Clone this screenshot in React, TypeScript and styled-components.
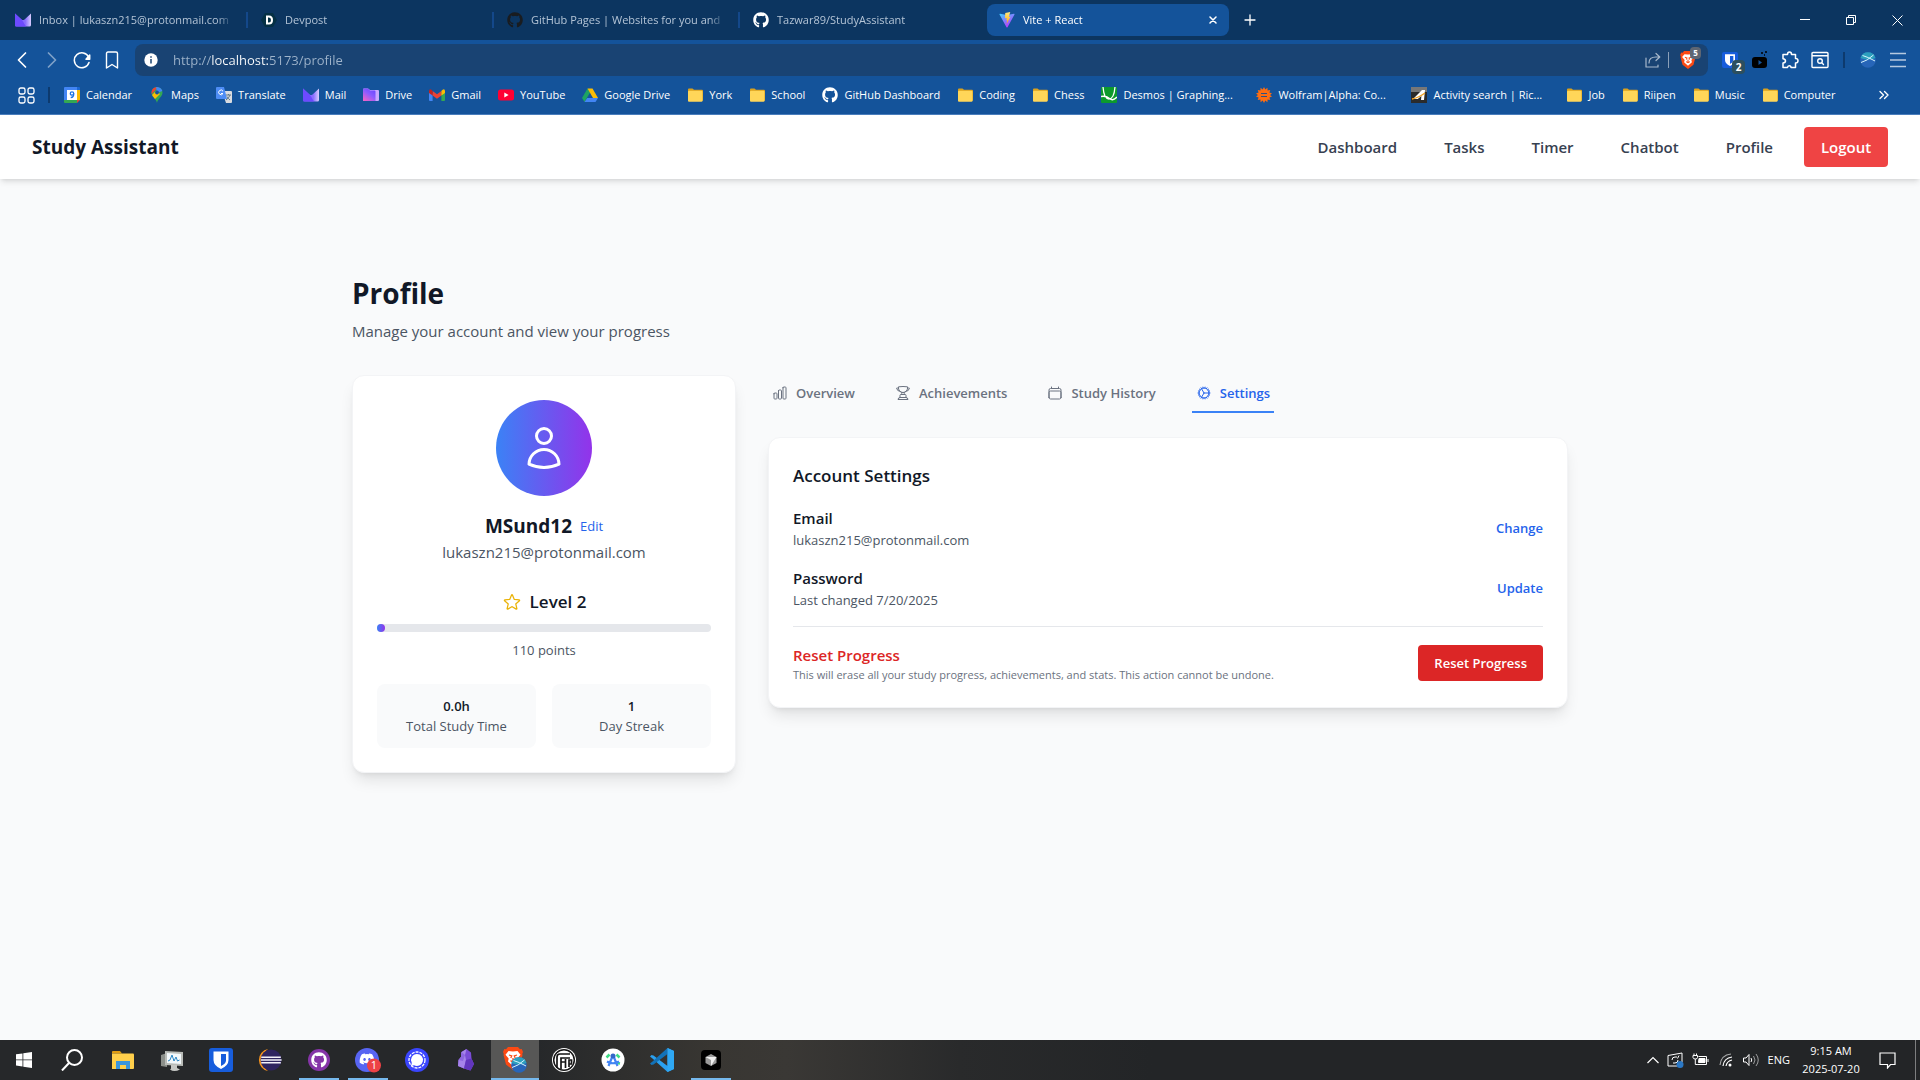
import React from "react";
import styled, { createGlobalStyle, css } from "styled-components";
import { FaGithub, FaDiscord } from "react-icons/fa";
import {
  HiOutlineUser,
  HiOutlineStar,
  HiOutlineChartBar,
  HiOutlineTrophy,
  HiOutlineCalendar,
  HiOutlineCog,
} from "react-icons/hi2";

const GlobalStyle = createGlobalStyle`
  *, *::before, *::after { box-sizing: border-box; }
  body { margin: 0; font-family: "Open Sans", "Noto Sans", sans-serif; font-size: 15px; line-height: 24px; color: #111827; }
  h1, h2, h3, p, dl, dt, dd, ul { margin: 0; padding: 0; }
  ul { list-style: none; }
  a { color: inherit; text-decoration: none; }
  button { margin: 0; padding: 0; border: 0; background: none; color: inherit; font: inherit; cursor: pointer; }
  svg { display: block; flex: none; }
`;

const Screen = styled.div`
  display: flex;
  flex-direction: column;
  min-height: 100vh;
  background: #f9fafb;
`;

/* ---------- browser chrome ---------- */

const Chrome = styled.header`
  background: #14539a;
  color: #fff;
  border-bottom: 1px solid #4a7ebd;
  font-size: 11px;
  line-height: 16px;
`;

const TabStrip = styled.div`
  display: flex;
  align-items: center;
  height: 40px;
  padding-left: 3px;
  background: #0c3560;
`;

const BrowserTab = styled.div<{ $active?: boolean }>`
  display: flex;
  align-items: center;
  gap: 8px;
  flex: 0 1 242px;
  min-width: 0;
  height: 32px;
  padding: 0 12px;
  border-radius: 8px;
  color: ${(p) => (p.$active ? "#fff" : "#b4c4d6")};
  background: ${(p) => (p.$active ? "#14539a" : "transparent")};
`;

const TabTitle = styled.a`
  flex: 1;
  overflow: hidden;
  white-space: nowrap;
  mask-image: linear-gradient(to right, #000 calc(100% - 16px), transparent 100%);
`;

const TabDivider = styled.span<{ $hidden?: boolean }>`
  flex: none;
  width: 2px;
  height: 16px;
  margin: 0 1px;
  background: ${(p) => (p.$hidden ? "transparent" : "#14488a")};
`;

const NewTab = styled.button`
  display: grid;
  place-items: center;
  width: 32px;
  height: 32px;
  margin-left: 5px;
`;

const WindowButtons = styled.div`
  display: flex;
  margin-left: auto;
`;

const WindowButton = styled.button`
  display: grid;
  place-items: center;
  width: 46px;
  height: 40px;
`;

const Toolbar = styled.div`
  display: flex;
  align-items: center;
  height: 40px;
  padding: 0 7px;
`;

const ToolButton = styled.button<{ $dim?: boolean }>`
  position: relative;
  display: grid;
  place-items: center;
  width: 30px;
  height: 32px;
  opacity: ${(p) => (p.$dim ? 0.45 : 1)};
`;

const AddressBar = styled.form`
  display: flex;
  align-items: center;
  flex: 1;
  height: 32px;
  margin: 0 7px 0 8px;
  padding: 0 5px 0 8px;
  border-radius: 8px;
  background: #194373;
`;

const AddressInput = styled.input`
  flex: 1;
  min-width: 0;
  margin-left: 14px;
  padding: 0;
  border: 0;
  outline: 0;
  font: 13px/20px "Open Sans", "Noto Sans", sans-serif;
  color: transparent;
  background: linear-gradient(to right, #9fb4cb 39px, #fff 39px, #fff 95px, #9fb4cb 95px);
  background-clip: text;
  -webkit-background-clip: text;
`;

const AddressLine = styled.span`
  width: 1px;
  height: 16px;
  margin-right: 4px;
  background: #8ba0b9;
`;

const ToolLine = styled.span`
  width: 2px;
  height: 16px;
  margin: 0 8px;
  background: #0d3a6e;
`;

const CountBadge = styled.span<{ $grey?: boolean }>`
  position: absolute;
  display: grid;
  place-items: center;
  border-radius: 4px;
  color: #fff;
  ${(p) =>
    p.$grey
      ? css`
          top: 3px;
          right: 2px;
          width: 11px;
          height: 12px;
          font: 700 8px/10px "Open Sans", sans-serif;
          background: #5e6673;
        `
      : css`
          right: 0;
          bottom: 2px;
          width: 13px;
          height: 14px;
          font: 700 10px/12px "Open Sans", sans-serif;
          background: #2c4f5e;
        `}
`;

const BookmarkBar = styled.nav`
  display: flex;
  align-items: center;
  height: 34px;
  padding: 0 30px 4px 18px;
`;

const BookmarkLine = styled.span`
  width: 2px;
  height: 16px;
  margin: 0 14px 0 13px;
  background: #0d3a6e;
`;

const BookmarkList = styled.ul`
  display: flex;
  flex: 1;
  gap: 17px;
`;

const Bookmark = styled.a<{ $long?: boolean }>`
  display: flex;
  align-items: center;
  gap: 6px;
  min-width: ${(p) => (p.$long ? "138px" : "0")};
  white-space: nowrap;
`;

/* ---------- application ---------- */

const NavBar = styled.nav`
  display: flex;
  align-items: center;
  justify-content: space-between;
  height: 64px;
  padding: 0 32px;
  background: #fff;
  box-shadow: 0 4px 6px -1px rgb(0 0 0 / 0.1), 0 2px 4px -2px rgb(0 0 0 / 0.1);
`;

const Brand = styled.a`
  font-size: 19px;
  line-height: 28px;
  font-weight: 700;
`;

const NavLinks = styled.div`
  display: flex;
  align-items: center;
  gap: 47px;
  font-weight: 600;
  color: #374151;
`;

const LogoutButton = styled.button`
  min-width: 84px;
  height: 40px;
  margin-left: -16px;
  padding: 0 16px;
  border-radius: 4px;
  background: #ef4444;
  color: #fff;
  font-weight: 600;
`;

const Page = styled.main`
  flex: 1;
  width: 100%;
  max-width: 1280px;
  margin: 0 auto;
  padding: 96px 32px 64px;
`;

const PageTitle = styled.h1`
  font-size: 28px;
  line-height: 36px;
  font-weight: 700;
`;

const PageIntro = styled.p`
  margin-top: 8px;
  color: #4b5563;
`;

const Columns = styled.div`
  display: grid;
  grid-template-columns: repeat(3, minmax(0, 1fr));
  align-items: start;
  gap: 32px;
  margin-top: 32px;
`;

const Card = styled.section`
  padding: 24px;
  border: 1px solid #f3f4f6;
  border-radius: 12px;
  background: #fff;
  box-shadow: 0 10px 15px -3px rgb(0 0 0 / 0.1), 0 4px 6px -4px rgb(0 0 0 / 0.1);
`;

const ProfileCard = styled(Card)`
  display: flex;
  flex-direction: column;
  align-items: center;
`;

const Avatar = styled.div`
  display: grid;
  place-items: center;
  width: 96px;
  height: 96px;
  border-radius: 50%;
  background: linear-gradient(to right, #3b82f6, #9333ea);
  color: #fff;
`;

const NameRow = styled.div`
  display: flex;
  align-items: center;
  gap: 8px;
  margin-top: 16px;
`;

const UserName = styled.h2`
  font-size: 19px;
  line-height: 28px;
  font-weight: 700;
`;

const EditButton = styled.button`
  font-size: 13px;
  line-height: 20px;
  color: #2563eb;
`;

const Muted = styled.p`
  color: #4b5563;
`;

const LevelRow = styled.div`
  display: flex;
  align-items: center;
  gap: 8px;
  margin-top: 24px;
  font-size: 17px;
  line-height: 28px;
  font-weight: 600;

  svg {
    color: #eab308;
  }
`;

const ProgressTrack = styled.div`
  width: 100%;
  height: 8px;
  margin-top: 8px;
  border-radius: 4px;
  background: #e5e7eb;
`;

const ProgressFill = styled.div`
  height: 8px;
  min-width: 8px;
  border-radius: 4px;
  background: linear-gradient(to right, #3b82f6, #9333ea);
`;

const Points = styled.p`
  margin-top: 8px;
  font-size: 13px;
  line-height: 20px;
  color: #4b5563;
`;

const Stats = styled.dl`
  display: grid;
  grid-template-columns: 1fr 1fr;
  gap: 16px;
  width: 100%;
  margin-top: 24px;
`;

const Stat = styled.div`
  display: flex;
  flex-direction: column-reverse;
  padding: 12px;
  border-radius: 8px;
  background: #f9fafb;
  font-size: 13px;
  line-height: 20px;
  text-align: center;

  dt {
    color: #4b5563;
  }

  dd {
    font-weight: 600;
  }
`;

const Details = styled.div`
  grid-column: span 2;
`;

const SectionTabs = styled.div`
  display: flex;
  gap: 32px;
  margin-bottom: 24px;
`;

const SectionTab = styled.button<{ $active?: boolean }>`
  display: flex;
  align-items: center;
  gap: 8px;
  padding: 8px 4px;
  border-bottom: 2px solid ${(p) => (p.$active ? "#3b82f6" : "transparent")};
  font-size: 13px;
  line-height: 20px;
  font-weight: 600;
  color: ${(p) => (p.$active ? "#2563eb" : "#6b7280")};
`;

const SectionTitle = styled.h2`
  font-size: 17px;
  line-height: 28px;
  font-weight: 600;
`;

const SettingRow = styled.div<{ $divided?: boolean }>`
  display: flex;
  align-items: center;
  justify-content: space-between;
  margin-top: 16px;
  ${(p) =>
    p.$divided &&
    css`
      padding-top: 16px;
      border-top: 1px solid #e5e7eb;
    `}
`;

const SettingName = styled.h3<{ $danger?: boolean }>`
  font-size: 15px;
  line-height: 24px;
  font-weight: 600;
  color: ${(p) => (p.$danger ? "#dc2626" : "#111827")};
`;

const SettingValue = styled.p<{ $small?: boolean }>`
  font-size: ${(p) => (p.$small ? 11 : 13)}px;
  line-height: ${(p) => (p.$small ? 16 : 20)}px;
  color: ${(p) => (p.$small ? "#6b7280" : "#4b5563")};
`;

const LinkButton = styled.button`
  font-size: 13px;
  line-height: 20px;
  font-weight: 600;
  color: #2563eb;
`;

const DangerButton = styled.button`
  padding: 8px 16px;
  border-radius: 4px;
  background: #dc2626;
  color: #fff;
  font-size: 13px;
  line-height: 20px;
  font-weight: 600;
`;

/* ---------- taskbar ---------- */

const Taskbar = styled.footer`
  display: flex;
  align-items: stretch;
  height: 40px;
  color: #fff;
  background: linear-gradient(to right, #26282a 0, #26282a 28%, #383632 37%, #3a3835 41%, #292a2b 50%, #232527 60%, #232527 100%);
`;

const AppButtons = styled.div`
  display: flex;
  gap: 1px;
  margin-left: 3px;
`;

const TaskButton = styled.button<{ $running?: boolean; $active?: boolean }>`
  position: relative;
  display: grid;
  place-items: center;
  width: 48px;
  height: 40px;
  background: ${(p) => (p.$active ? "#575756" : "transparent")};

  &::after {
    content: "";
    position: absolute;
    left: ${(p) => (p.$active ? 0 : 4)}px;
    right: ${(p) => (p.$active ? 0 : 4)}px;
    bottom: 0;
    height: 2px;
    background: ${(p) => (p.$running || p.$active ? "#76b9ed" : "transparent")};
  }
`;

const Tray = styled.div`
  display: flex;
  align-items: center;
  gap: 8px;
  margin-left: auto;
  font-size: 11px;
  line-height: 18px;
`;

const Clock = styled.time`
  width: 66px;
  margin-right: 7px;
  text-align: center;
`;

const ShowDesktop = styled.button`
  width: 5px;
  height: 40px;
  margin-left: 11px;
  border-left: 1px solid #7d7e7f;
`;

/* ---------- drawings ---------- */

const ProtonMail = () => (
  <svg width="16" height="16" viewBox="0 0 16 16">
    <defs>
      <linearGradient id="pm" x1="0" x2="1">
        <stop offset="0" stopColor="#7a5cff" />
        <stop offset=".65" stopColor="#8a6eff" />
        <stop offset="1" stopColor="#d9ccff" />
      </linearGradient>
    </defs>
    <path d="M0 1.500l6.500 6q1.500 1.200 3 0L16 1.500V13q0 1.500-1.500 1.500h-13Q0 14.500 0 13z" fill="url(#pm)" />
    <path d="M0 1.500l7 6.500 4 6.500H1.500Q0 14.500 0 13z" fill="#6d4aff" />
  </svg>
);

const ProtonDrive = () => (
  <svg width="16" height="16" viewBox="0 0 16 16">
    <defs>
      <linearGradient id="pd" x1="0" y1="1" x2=".7" y2="0">
        <stop offset="0" stopColor="#ff62c0" />
        <stop offset=".6" stopColor="#8b5cff" />
        <stop offset="1" stopColor="#6d4aff" />
      </linearGradient>
    </defs>
    <path d="M0 2.500q0-1 1-1h4l2 1.500h8q1 0 1 1v9q0 1-1 1H1q-1 0-1-1z" fill="#c9a8ff" />
    <path d="M0 2.500q0-1 1-1h4l2 2h4.500q1 0 1 1V14H1q-1 0-1-1z" fill="url(#pd)" />
  </svg>
);

const Devpost = () => (
  <svg width="16" height="16" viewBox="0 0 16 16">
    <path d="M4 1h8l4 7-4 7H4L0 8z" fill="#053044" />
    <path d="M6 4.500h2q3 0 3 3.500t-3 3.500H6z" fill="none" stroke="#fff" strokeWidth="2" />
  </svg>
);

const Vite = () => (
  <svg width="16" height="16" viewBox="0 0 32 32">
    <defs>
      <linearGradient id="v1" x1="0" y1="0" x2=".6" y2="1">
        <stop offset="0" stopColor="#41d1ff" />
        <stop offset="1" stopColor="#bd34fe" />
      </linearGradient>
      <linearGradient id="v2" x1="0" y1="0" x2="0" y2="1">
        <stop offset="0" stopColor="#ffea83" />
        <stop offset="1" stopColor="#ffa800" />
      </linearGradient>
    </defs>
    <path d="M31 5L17 30.500q-1 1-2 0L1 5q-.5-1.500 1-1.500l14 2.500 14-2.500q1.500 0 1 1.500z" fill="url(#v1)" />
    <path d="M22.500 0L12.500 2 12 12.500l3.500-.7-1 5 2.200-.6-1.600 7.800L23 9.500l-3.300.6z" fill="url(#v2)" />
  </svg>
);

const CalendarMark = () => (
  <svg width="16" height="16" viewBox="0 0 16 16">
    <path d="M0 1q0-1 1-1h12v3H3v10H0z" fill="#4285f4" />
    <path d="M13 0h2q1 0 1 1v2h-3z" fill="#1967d2" />
    <path d="M13 3h3v10h-3z" fill="#fbbc04" />
    <path d="M0 13h13v3H1q-1 0-1-1z" fill="#34a853" />
    <path d="M13 13h3l-3 3z" fill="#ea4335" />
    <path d="M3 3h10v10H3z" fill="#fff" />
    <circle cx="8" cy="6.500" r="1.700" fill="none" stroke="#1a73e8" strokeWidth="1.300" />
    <path d="M9.700 6.500q.2 4-3 4" fill="none" stroke="#1a73e8" strokeWidth="1.300" />
  </svg>
);

const MapsMark = () => (
  <svg width="16" height="16" viewBox="0 0 16 16">
    <defs>
      <clipPath id="pin">
        <path d="M8 0a5.500 5.500 0 0 1 5.500 5.500C13.500 10 9 11 8 16 7 11 2.500 10 2.500 5.500A5.500 5.500 0 0 1 8 0z" />
      </clipPath>
    </defs>
    <g clipPath="url(#pin)">
      <path d="M0 0h16v16H0z" fill="#34a853" />
      <path d="M0 0h9L2 8H0z" fill="#ea4335" />
      <path d="M7 0h9v3L8 6z" fill="#4285f4" />
      <path d="M2 9l5-5 4 3-6 6z" fill="#fbbc04" />
    </g>
    <circle cx="8" cy="5.500" r="1.900" fill="#14539a" />
  </svg>
);

const TranslateMark = () => (
  <svg width="16" height="16" viewBox="0 0 16 16">
    <path d="M6 4h9q1 0 1 1v10q0 1-1 1h-5z" fill="#dadce0" />
    <path d="M1 0h7l3 12H1q-1 0-1-1V1q0-1 1-1z" fill="#4e8df5" />
    <path d="M7 4.200A2.300 2.300 0 1 0 7 6.500H5" fill="none" stroke="#fff" />
    <path d="M10 8h5M12.500 7v1M14 8q-1 3-4 5M11 9.500q1 2 3 3.500" fill="none" stroke="#607988" />
  </svg>
);

const GmailMark = () => (
  <svg width="16" height="16" viewBox="0 0 16 16">
    <path d="M0 4l3.600 2.500V14H1q-1 0-1-1z" fill="#4285f4" />
    <path d="M16 4l-3.600 2.500V14H15q1 0 1-1z" fill="#34a853" />
    <path d="M3.600 4L8 7.300 12.400 4v4.500L8 11.800 3.600 8.500z" fill="#ea4335" />
    <path d="M0 4q.3-2.600 2.400-1.200L3.600 4v4.500L0 6z" fill="#c5221f" />
    <path d="M16 4q-.3-2.600-2.400-1.200L12.400 4v4.500L16 6z" fill="#fbbc04" />
  </svg>
);

const YouTubeMark = () => (
  <svg width="16" height="16" viewBox="0 0 16 16">
    <rect y="2.500" width="16" height="11" rx="2.500" fill="#f03" />
    <path d="M6.300 5.500L10.600 8l-4.300 2.500z" fill="#fff" />
  </svg>
);

const GoogleDriveMark = () => (
  <svg width="16" height="16" viewBox="0 0 16 16">
    <path d="M5.500 1.500L0 11l2.500 4 5.600-9.400z" fill="#1ea362" />
    <path d="M5.500 1.500h5L16 11h-5z" fill="#fbbc04" />
    <path d="M5.200 11H16l-2.500 4H2.500z" fill="#4285f4" />
  </svg>
);

const FolderMark = () => (
  <svg width="16" height="16" viewBox="0 0 16 16">
    <path d="M1 2.500Q1 1.500 2 1.500h3.500L7 2.700h8q1 0 1 1V13q0 1-1 1H2q-1 0-1-1z" fill="#dba11c" />
    <rect x="1" y="3.700" width="14.500" height="11" rx="1" fill="#ffd659" />
  </svg>
);

const DesmosMark = () => (
  <svg width="16" height="16" viewBox="0 0 16 16">
    <rect width="16" height="16" rx="1" fill="#0c9a2c" />
    <path d="M2 0q1 12 6 12t6-12M0 9.500q5-1 8.500 2t7.500-1.500" fill="none" stroke="#fff" strokeWidth="1.300" />
  </svg>
);

const WolframMark = () => (
  <svg width="16" height="16" viewBox="0 0 16 16">
    <path
      d="M8 0l1.300 2.500L11.400.8l.2 2.800 2.700-.5-.9 2.500L16 6.500 14 8l2 1.600-2.600.8.900 2.500-2.700-.5-.2 2.800-2.100-1.700L8 16l-1.300-2.500-2.100 1.700-.2-2.800-2.700.5.900-2.500L0 9.600 2 8 0 6.500l2.600-.9-.9-2.500 2.700.5.200-2.800 2.100 1.700z"
      fill="#ff6d10"
    />
    <path d="M5 6.500h6M5 9.500h6" stroke="#2d5186" strokeWidth="1.200" />
  </svg>
);

const ActivityMark = () => (
  <svg width="16" height="16" viewBox="0 0 16 16">
    <path d="M0 0h16v16H0z" fill="#2b2b2b" />
    <path d="M0 0h16v5H0z" fill="#777" />
    <path d="M2 12L11 3h3l-1 10h-3l.4-4-3.600 3z" fill="#fff" />
    <path d="M1 12q6-1 13-6" stroke="#f0a020" fill="none" strokeWidth="1.300" />
  </svg>
);

const BitwardenMark = ({ size = 24 }: { size?: number }) => (
  <svg width={size} height={size} viewBox="0 0 24 24">
    <rect width="24" height="24" rx="3" fill="#175ddc" />
    <path d="M4.500 3.500h15V12q0 5.500-7.500 9-7.500-3.500-7.500-9z" fill="#fff" />
    <path d="M12 6h5v6.500q0 3-5 5.500z" fill="#175ddc" />
  </svg>
);

const BraveMark = ({ width, height }: { width: number; height: number }) => (
  <svg width={width} height={height} viewBox="0 0 20 23">
    <path d="M5 0h10l2 2.200 1.700-.2L20 5l-.8 2 .3 1-2.500 9.500-7 5.500-7-5.500L.5 8l.3-1L0 5l1.300-3 1.700.2z" fill="#fb4a14" />
    <path
      d="M5.500 4L10 4.600 14.500 4 17.500 7.800 14.300 11.500l.7 3-2.500 2.200L10 19l-2.500-2.300L5 14.500l.7-3L2.500 7.800z"
      fill="#fff"
    />
    <path d="M6 8l2.700.9-.9 2M14 8l-2.700.9.9 2M7.500 13.600L10 15l2.500-1.400M10 11v4" fill="none" stroke="#fb4a14" strokeWidth="1.300" />
  </svg>
);

const CrossedGlobe = ({ size = 14 }: { size?: number }) => (
  <svg width={size} height={size} viewBox="0 0 16 16">
    <circle cx="8" cy="8" r="7.800" fill="#2765b8" />
    <path d="M.5 6A7.800 7.800 0 0 1 15.500 6Q8 9 .5 6z" fill="#2c9fbd" />
    <path d="M1 10.500Q7 9 13.500 3M2.500 3.500Q8 5 15 9" fill="none" stroke="#d4f4ff" />
  </svg>
);

const line = { fill: "none", stroke: "currentColor", strokeLinecap: "round", strokeLinejoin: "round" } as const;

const tabs = [
  { icon: <ProtonMail />, title: "Inbox | lukaszn215@protonmail.com" },
  { icon: <Devpost />, title: "Devpost" },
  { icon: <FaGithub size={16} color="#191c20" />, title: "GitHub Pages | Websites for you and" },
  { icon: <FaGithub size={16} color="#fff" />, title: "Tazwar89/StudyAssistant" },
];

const bookmarks: { icon: React.ReactNode; label: string; long?: boolean }[] = [
  { icon: <CalendarMark />, label: "Calendar" },
  { icon: <MapsMark />, label: "Maps" },
  { icon: <TranslateMark />, label: "Translate" },
  { icon: <ProtonMail />, label: "Mail" },
  { icon: <ProtonDrive />, label: "Drive" },
  { icon: <GmailMark />, label: "Gmail" },
  { icon: <YouTubeMark />, label: "YouTube" },
  { icon: <GoogleDriveMark />, label: "Google Drive" },
  { icon: <FolderMark />, label: "York" },
  { icon: <FolderMark />, label: "School" },
  { icon: <FaGithub size={16} />, label: "GitHub Dashboard" },
  { icon: <FolderMark />, label: "Coding" },
  { icon: <FolderMark />, label: "Chess" },
  { icon: <DesmosMark />, label: "Desmos | Graphing...", long: true },
  { icon: <WolframMark />, label: "Wolfram|Alpha: Co...", long: true },
  { icon: <ActivityMark />, label: "Activity search | Ric...", long: true },
  { icon: <FolderMark />, label: "Job" },
  { icon: <FolderMark />, label: "Riipen" },
  { icon: <FolderMark />, label: "Music" },
  { icon: <FolderMark />, label: "Computer" },
];

const BrowserChrome = () => (
  <Chrome>
    <TabStrip>
      {tabs.map((t, i) => (
        <React.Fragment key={t.title}>
          <BrowserTab>
            {t.icon}
            <TabTitle href="#">{t.title}</TabTitle>
          </BrowserTab>
          <TabDivider $hidden={i === tabs.length - 1} />
        </React.Fragment>
      ))}
      <BrowserTab $active>
        <Vite />
        <TabTitle href="#">Vite + React</TabTitle>
        <button aria-label="Close tab">
          <svg width="8" height="8" viewBox="0 0 8 8" {...line} strokeWidth="1.500">
            <path d="M1 1l6 6M7 1L1 7" />
          </svg>
        </button>
      </BrowserTab>
      <NewTab aria-label="New tab">
        <svg width="12" height="12" viewBox="0 0 12 12" {...line} strokeWidth="1.300">
          <path d="M6 1v10M1 6h10" />
        </svg>
      </NewTab>
      <WindowButtons>
        <WindowButton aria-label="Minimize">
          <svg width="10" height="10" viewBox="0 0 10 10">
            <path d="M0 4.500h10" stroke="#fff" />
          </svg>
        </WindowButton>
        <WindowButton aria-label="Restore">
          <svg width="10" height="10" viewBox="0 0 10 10" fill="none" stroke="#fff">
            <path d="M.5 2.500h7v7h-7zM2.500 2.500v-2h7v7h-2" />
          </svg>
        </WindowButton>
        <WindowButton aria-label="Close">
          <svg width="11" height="11" viewBox="0 0 11 11" stroke="#fff">
            <path d="M.5.5l10 10M10.500.5l-10 10" />
          </svg>
        </WindowButton>
      </WindowButtons>
    </TabStrip>
    <Toolbar>
      <ToolButton aria-label="Back">
        <svg width="18" height="18" viewBox="0 0 18 18" {...line} strokeWidth="1.700">
          <path d="M12.500 2L5.500 9l7 7" />
        </svg>
      </ToolButton>
      <ToolButton $dim aria-label="Forward">
        <svg width="18" height="18" viewBox="0 0 18 18" {...line} strokeWidth="1.700">
          <path d="M5.500 2l7 7-7 7" />
        </svg>
      </ToolButton>
      <ToolButton aria-label="Reload">
        <svg width="18" height="18" viewBox="0 0 18 18" {...line} strokeWidth="1.500">
          <path d="M16 11.500A7.500 7.500 0 1 1 15.600 6" />
          <path d="M16.700 4v4.200h-3.700z" fill="currentColor" />
        </svg>
      </ToolButton>
      <ToolButton aria-label="Bookmark this page">
        <svg width="18" height="18" viewBox="0 0 18 18" {...line} strokeWidth="1.400">
          <path d="M3.500 2.500q0-1.500 1.500-1.500h8q1.500 0 1.500 1.500V17L9 13.500 3.500 17z" />
        </svg>
      </ToolButton>
      <AddressBar>
        <svg width="16" height="16" viewBox="0 0 16 16">
          <circle cx="8" cy="8" r="6.700" fill="#fff" />
          <path d="M8 7v4.500M8 4.300v1.400" stroke="#194373" strokeWidth="1.500" />
        </svg>
        <AddressInput aria-label="Address" defaultValue="http://localhost:5173/profile" />
        <ToolButton type="button" aria-label="Share">
          <svg width="16" height="16" viewBox="0 0 16 16" {...line} stroke="#a7b8cb" strokeWidth="1.200">
            <path d="M1 6v9h12v-2M4 11q0-6 7-6h3.500M11 1.500L14.800 5 11 8.500" />
          </svg>
        </ToolButton>
        <AddressLine />
        <ToolButton type="button" aria-label="Brave Shields">
          <BraveMark width={16} height={18} />
          <CountBadge $grey>5</CountBadge>
        </ToolButton>
      </AddressBar>
      <ToolButton aria-label="Bitwarden">
        <BitwardenMark size={16} />
        <CountBadge>2</CountBadge>
      </ToolButton>
      <ToolButton aria-label="Video controls">
        <svg width="18" height="18" viewBox="0 0 18 18">
          <rect x="1" y="6" width="15" height="11" rx="3" fill="#000" />
          <path d="M7.500 9v5l3.500-2.500z" fill="#14539a" />
          <path d="M10 2h2M13 4h1M14 1h2" stroke="#000" strokeWidth="1.400" />
        </svg>
      </ToolButton>
      <ToolButton aria-label="Extensions">
        <svg width="18" height="18" viewBox="0 0 18 18" {...line} strokeWidth="1.500">
          <path d="M2 3.500h4.500Q6.500 1 8.500 1t2 2.500h4v4q2.500 0 2.500 2.200T14.500 12v4.500H10q0-1.800-1.700-1.800T6.500 16.500H2V12q2.500-.2 2.500-2T2 7.800z" />
        </svg>
      </ToolButton>
      <ToolButton aria-label="Search tabs">
        <svg width="18" height="18" viewBox="0 0 18 18" {...line} strokeWidth="1.400">
          <path d="M1 2.500Q1 1.500 2 1.500h14q1 0 1 1v13q0 1-1 1H2q-1 0-1-1zM1 4.800h16M11 12l1.500 1.500" />
          <circle cx="9" cy="10" r="2.300" />
        </svg>
      </ToolButton>
      <ToolLine />
      <ToolButton aria-label="Profile">
        <CrossedGlobe size={16} />
      </ToolButton>
      <ToolButton aria-label="Menu">
        <svg width="18" height="16" viewBox="0 0 18 16" stroke="#b6c9e0" strokeWidth="1.600">
          <path d="M1 1.500h16M1 8h16M1 14.500h16" />
        </svg>
      </ToolButton>
    </Toolbar>
    <BookmarkBar aria-label="Bookmarks">
      <button aria-label="Apps">
        <svg width="17" height="17" viewBox="0 0 17 17" {...line} strokeWidth="1.300">
          <rect x="1" y="1" width="6" height="6" rx="1.800" />
          <rect x="10" y="1" width="6" height="6" rx="1.800" />
          <rect x="1" y="10" width="6" height="6" rx="1.800" />
          <rect x="10" y="10" width="6" height="6" rx="1.800" />
        </svg>
      </button>
      <BookmarkLine />
      <BookmarkList>
        {bookmarks.map((b) => (
          <li key={b.label}>
            <Bookmark href="#" $long={b.long}>
              {b.icon}
              {b.label}
            </Bookmark>
          </li>
        ))}
      </BookmarkList>
      <button aria-label="More bookmarks">
        <svg width="12" height="12" viewBox="0 0 12 12" {...line} strokeWidth="1.400">
          <path d="M2 2.500L5.500 6 2 9.500M6.500 2.500L10 6 6.500 9.500" />
        </svg>
      </button>
    </BookmarkBar>
  </Chrome>
);

const apps: { name: string; icon: React.ReactNode; running?: boolean; active?: boolean }[] = [
  {
    name: "File Explorer",
    icon: (
      <svg width="24" height="24" viewBox="0 0 24 24">
        <path d="M1 4q0-1 1-1h7l2 2.500H1z" fill="#e09c12" />
        <path d="M1 5.500h21q1 0 1 1V20q0 1-1 1H1z" fill="#ffcf4b" />
        <path d="M5 13h14v8h-4v-4H9v4H5z" fill="#3a96dd" />
      </svg>
    ),
  },
  {
    name: "Performance Monitor",
    icon: (
      <svg width="24" height="24" viewBox="0 0 24 24">
        <path d="M1 7l6-2v14l-6-1z" fill="#8b8f8a" />
        <path d="M5 3l18 1v14L5 17z" fill="#b9bcb8" />
        <path d="M7 5l14 1v10L7 15z" fill="#f2f8fb" />
        <path d="M8 13l2-1 2-5 2 6 2-4 1.500 4 2-1" fill="none" stroke="#2a86c4" />
        <path d="M11 17h6v3l3 1.500q-6 3-10 0l1-1z" fill="#c5c7c4" />
      </svg>
    ),
  },
  { name: "Bitwarden", icon: <BitwardenMark /> },
  {
    name: "Eclipse",
    icon: (
      <svg width="24" height="24" viewBox="0 0 24 24">
        <path d="M10 1A11.200 11.200 0 0 0 10 23 14 14 0 0 1 10 1z" fill="#f7941e" />
        <circle cx="13" cy="12" r="10.500" fill="#2f2560" />
        <path d="M3.200 9.200h19.600M2.800 12h20.800M3.200 14.800h19.600" stroke="#f4f2fa" strokeWidth="1.500" />
      </svg>
    ),
  },
  {
    name: "GitHub Desktop",
    running: true,
    icon: (
      <svg width="24" height="24" viewBox="0 0 24 24">
        <circle cx="12" cy="12" r="11" fill="#8534a8" />
        <FaGithub x="4" y="4" size={16} color="#fff" />
      </svg>
    ),
  },
  {
    name: "Discord",
    running: true,
    icon: (
      <svg width="26" height="28" viewBox="0 -2 26 28">
        <circle cx="12" cy="12" r="12" fill="#5865f2" />
        <FaDiscord x="4" y="3" size={16} color="#fff" />
        <circle cx="19" cy="17.500" r="7" fill="#ed4245" />
        <text x="19" y="21" textAnchor="middle" fontSize="11" fill="#fff">
          1
        </text>
      </svg>
    ),
  },
  {
    name: "Signal",
    icon: (
      <svg width="24" height="24" viewBox="0 0 24 24">
        <circle cx="12" cy="12" r="12" fill="#3a45fd" />
        <circle cx="12" cy="12" r="8" fill="none" stroke="#fff" strokeWidth="1.300" strokeDasharray="3 1" />
        <path d="M12 6a6 6 0 1 1-3 11.200L6 18l.8-3A6 6 0 0 1 12 6z" fill="#fff" />
      </svg>
    ),
  },
  {
    name: "Obsidian",
    icon: (
      <svg width="18" height="24" viewBox="0 0 18 24">
        <path d="M9.500 1L14 4.500l.5 6L17 16l-3.500 6.500L7 20.500 1 18l.5-6L4 9l.5-5z" fill="#7a4cd6" />
        <path d="M9.500 1L8 7l1 5-2 8.500L1 18l.5-6L4 9l.5-5z" fill="#a684ea" />
        <path d="M4.500 4L8 7l-2 6-4.500-1L4 9z" fill="#8e66e0" />
        <path d="M9 12l5.500-1.500L17 16l-3.500 6.500L7 20.500z" fill="#6236bd" />
      </svg>
    ),
  },
  {
    name: "Brave",
    active: true,
    icon: (
      <svg width="24" height="26" viewBox="0 0 24 26">
        <BraveMark width={20} height={23} />
        <g transform="translate(8 10)">
          <CrossedGlobe size={16} />
        </g>
      </svg>
    ),
  },
  {
    name: "Font tool",
    icon: (
      <svg width="24" height="24" viewBox="0 0 24 24">
        <circle cx="12" cy="12" r="12" fill="#fff" />
        <circle cx="12" cy="12" r="10.300" fill="none" stroke="#151515" strokeWidth="1.500" />
        <path d="M5 20V9q0-3 3-3h10M9 21V10h9M9 14h4M13.500 20v-9M17 19v-7h2.500v4H17" fill="none" stroke="#151515" strokeWidth="1.700" />
      </svg>
    ),
  },
  {
    name: "Android Studio",
    icon: (
      <svg width="24" height="24" viewBox="0 0 24 24">
        <circle cx="12" cy="12" r="11.500" fill="#fff" />
        <path d="M5.500 9.500l3-3M18.500 9.500l-3-3M16 15l3 .5" stroke="#3ddc84" strokeWidth="2.500" />
        <path d="M12 7l-4.500 11M12 7l4.500 11M6 13.500q6 3.500 12 0" fill="none" stroke="#4285f4" strokeWidth="2.200" />
        <circle cx="12" cy="8" r="2.500" fill="#3367c8" />
      </svg>
    ),
  },
  {
    name: "Visual Studio Code",
    icon: (
      <svg width="24" height="24" viewBox="0 0 24 24">
        <path d="M17.500 0L24 3v18l-6.500 3L2.500 10.500 0 8.500l1.500-1.500 2 .5L17.500 18V6z" fill="#2aa0ef" />
        <path d="M17.500 6L3.500 16.500l-2 .5L0 15.500l2.500-2L17.500 0z" fill="#1272b8" />
        <path d="M17.500 0L24 3v18l-6.500 3z" fill="#2fa8f4" />
      </svg>
    ),
  },
  {
    name: "Cursor",
    running: true,
    icon: (
      <svg width="20" height="20" viewBox="0 0 20 20">
        <rect width="20" height="20" rx="4" fill="#000" />
        <path d="M10 4l5.500 3v6L10 16l-5.500-3V7z" fill="#9b9b9b" />
        <path d="M4.500 7h11L10 16v-6z" fill="#f0f0f0" />
      </svg>
    ),
  },
];

const WindowsTaskbar = () => (
  <Taskbar>
    <TaskButton aria-label="Start">
      <svg width="16" height="16" viewBox="0 0 16 16" fill="#fff">
        <path d="M0 2.300L6.500 1.400v6.100H0zM7.300 1.300L16 0v7.500H7.300zM0 8.300h6.500v6.200L0 13.600zM7.300 8.300H16V16l-8.700-1.300z" />
      </svg>
    </TaskButton>
    <TaskButton aria-label="Search">
      <svg width="22" height="22" viewBox="0 0 22 22" fill="none" stroke="#fff" strokeWidth="2">
        <circle cx="13.500" cy="8.500" r="7.500" />
        <path d="M8 14l-7 7.500" />
      </svg>
    </TaskButton>
    <AppButtons>
      {apps.map((a) => (
        <TaskButton key={a.name} aria-label={a.name} $running={a.running} $active={a.active}>
          {a.icon}
        </TaskButton>
      ))}
    </AppButtons>
    <Tray>
      <button aria-label="Show hidden icons">
        <svg width="12" height="8" viewBox="0 0 12 8" fill="none" stroke="#fff" strokeWidth="1.200">
          <path d="M.5 7L6 1.500 11.500 7" />
        </svg>
      </button>
      <svg width="17" height="16" viewBox="0 0 17 16" fill="none" stroke="#fff">
        <path d="M1 3.500l14-2.500v9M1 3.500V14h9M5 8q0-3 3-3h2M12 3.500l-1.500 3M11 8q0 3-3 3H6" />
        <circle cx="13" cy="12.500" r="3.500" fill="#2b78c5" stroke="none" />
      </svg>
      <svg width="17" height="14" viewBox="0 0 17 14" fill="none" stroke="#fff">
        <path d="M6.500 3.500h8v8h-9" />
        <path d="M7 5.500h6v4H6.500z" fill="#fff" />
        <path d="M16 6v3M1 2.500h4.500v2Q5.500 6 3.300 6T1 4.500zM2 .5v2M4.500.5v2M3.300 6v5.500h2.500" />
      </svg>
      <svg width="18" height="14" viewBox="0 0 18 14" fill="none" stroke="#fff" strokeWidth="1.200">
        <path d="M3 12Q4 2 14 1" opacity=".6" />
        <path d="M6 13Q7 5 15 4M9 13q1-5 6-6" />
        <circle cx="13" cy="12" r="1.500" fill="#fff" stroke="none" />
      </svg>
      <svg width="17" height="14" viewBox="0 0 17 14" fill="none" stroke="#fff">
        <path d="M.5 5h2.500l3-3.500v11L3 9H.5zM8 5q1.500 2 0 4" />
        <path d="M10.500 3q3 4 0 8M13 1q4.500 6 0 12" opacity=".55" />
      </svg>
      <span>ENG</span>
      <Clock dateTime="2025-07-20T09:15">
        9:15 AM
        <br />
        2025-07-20
      </Clock>
      <button aria-label="Notifications">
        <svg width="17" height="17" viewBox="0 0 17 17" fill="none" stroke="#fff" strokeWidth="1.200">
          <path d="M1 1h15v11.500h-4.500L8.500 16v-3.500H1z" />
        </svg>
      </button>
      <ShowDesktop aria-label="Show desktop" />
    </Tray>
  </Taskbar>
);

const sections = [
  { label: "Overview", Icon: HiOutlineChartBar },
  { label: "Achievements", Icon: HiOutlineTrophy },
  { label: "Study History", Icon: HiOutlineCalendar },
  { label: "Settings", Icon: HiOutlineCog },
];

export default function App() {
  return (
    <Screen>
      <GlobalStyle />
      <BrowserChrome />
      <NavBar>
        <Brand href="#">Study Assistant</Brand>
        <NavLinks>
          {["Dashboard", "Tasks", "Timer", "Chatbot", "Profile"].map((l) => (
            <a key={l} href="#">
              {l}
            </a>
          ))}
          <LogoutButton>Logout</LogoutButton>
        </NavLinks>
      </NavBar>
      <Page>
        <PageTitle>Profile</PageTitle>
        <PageIntro>Manage your account and view your progress</PageIntro>
        <Columns>
          <ProfileCard>
            <Avatar>
              <HiOutlineUser size={48} />
            </Avatar>
            <NameRow>
              <UserName>MSund12</UserName>
              <EditButton>Edit</EditButton>
            </NameRow>
            <Muted>lukaszn215@protonmail.com</Muted>
            <LevelRow>
              <HiOutlineStar size={20} />
              Level 2
            </LevelRow>
            <ProgressTrack>
              <ProgressFill style={{ width: `${(110 / 10000) * 100}%` }} />
            </ProgressTrack>
            <Points>110 points</Points>
            <Stats>
              <Stat>
                <dt>Total Study Time</dt>
                <dd>0.0h</dd>
              </Stat>
              <Stat>
                <dt>Day Streak</dt>
                <dd>1</dd>
              </Stat>
            </Stats>
          </ProfileCard>
          <Details>
            <SectionTabs role="tablist">
              {sections.map(({ label, Icon }) => (
                <SectionTab key={label} role="tab" $active={label === "Settings"} aria-selected={label === "Settings"}>
                  <Icon size={16} />
                  {label}
                </SectionTab>
              ))}
            </SectionTabs>
            <Card>
              <SectionTitle>Account Settings</SectionTitle>
              <SettingRow>
                <div>
                  <SettingName>Email</SettingName>
                  <SettingValue>lukaszn215@protonmail.com</SettingValue>
                </div>
                <LinkButton>Change</LinkButton>
              </SettingRow>
              <SettingRow>
                <div>
                  <SettingName>Password</SettingName>
                  <SettingValue>Last changed 7/20/2025</SettingValue>
                </div>
                <LinkButton>Update</LinkButton>
              </SettingRow>
              <SettingRow $divided>
                <div>
                  <SettingName $danger>Reset Progress</SettingName>
                  <SettingValue $small>
                    This will erase all your study progress, achievements, and stats. This action cannot be undone.
                  </SettingValue>
                </div>
                <DangerButton>Reset Progress</DangerButton>
              </SettingRow>
            </Card>
          </Details>
        </Columns>
      </Page>
      <WindowsTaskbar />
    </Screen>
  );
}
